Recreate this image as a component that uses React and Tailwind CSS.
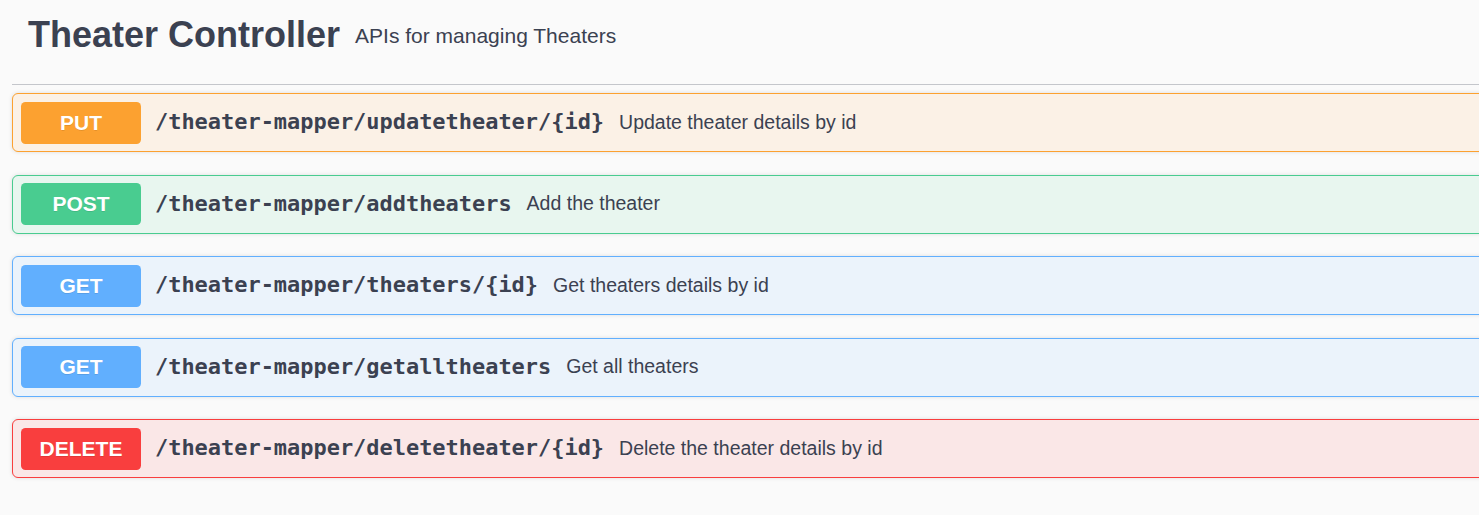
const ops = [
  {
    method: 'PUT',
    path: '/theater-mapper/updatetheater/{id}',
    desc: 'Update theater details by id',
    box: 'border-[#fca130] bg-[#fbf1e6]',
    badge: 'bg-[#fca130]',
  },
  {
    method: 'POST',
    path: '/theater-mapper/addtheaters',
    desc: 'Add the theater',
    box: 'border-[#49cc90] bg-[#e8f6ef]',
    badge: 'bg-[#49cc90]',
  },
  {
    method: 'GET',
    path: '/theater-mapper/theaters/{id}',
    desc: 'Get theaters details by id',
    box: 'border-[#61affe] bg-[#ebf3fb]',
    badge: 'bg-[#61affe]',
  },
  {
    method: 'GET',
    path: '/theater-mapper/getalltheaters',
    desc: 'Get all theaters',
    box: 'border-[#61affe] bg-[#ebf3fb]',
    badge: 'bg-[#61affe]',
  },
  {
    method: 'DELETE',
    path: '/theater-mapper/deletetheater/{id}',
    desc: 'Delete the theater details by id',
    box: 'border-[#f93e3e] bg-[#fae7e7]',
    badge: 'bg-[#f93e3e]',
  },
]

function OpBlock({ op }) {
  return (
    <div
      className={`mb-[22.5px] flex h-[59px] items-center rounded-[6px] border px-[8px] shadow-[0_0_4px_rgba(0,0,0,0.12)] ${op.box}`}
    >
      <span
        className={`w-[120px] shrink-0 rounded-[4.5px] py-[9px] text-center text-[21px] font-bold leading-[24px] text-white [text-shadow:0_1px_0_rgba(0,0,0,0.1)] ${op.badge}`}
      >
        {op.method}
      </span>
      <span className="ml-[14px] font-['DejaVu_Sans_Mono',monospace] text-[21.95px] font-bold text-[#3b4151]">
        {op.path}
      </span>
      <span className="ml-[15px] text-[19.5px] text-[#3b4151]">{op.desc}</span>
    </div>
  )
}

export default function App() {
  return (
    <div className="min-h-[515px] w-full overflow-hidden bg-[#fafafa] font-['Liberation_Sans',Arial,sans-serif]">
      <div className="w-[1520px] pl-[12px]">
        <div className="flex items-center border-b border-[#c4c6cb] pb-[31px] pl-[16px] pt-[17px]">
          <h4 className="text-[36px] font-bold leading-[36px] text-[#3b4151]">Theater Controller</h4>
          <span className="ml-[15px] mt-[2px] text-[21px] leading-[24px] text-[#3b4151]">
            APIs for managing Theaters
          </span>
        </div>
        <div className="pt-[8px]">
          {ops.map((op) => (
            <OpBlock key={op.path} op={op} />
          ))}
        </div>
      </div>
    </div>
  )
}
